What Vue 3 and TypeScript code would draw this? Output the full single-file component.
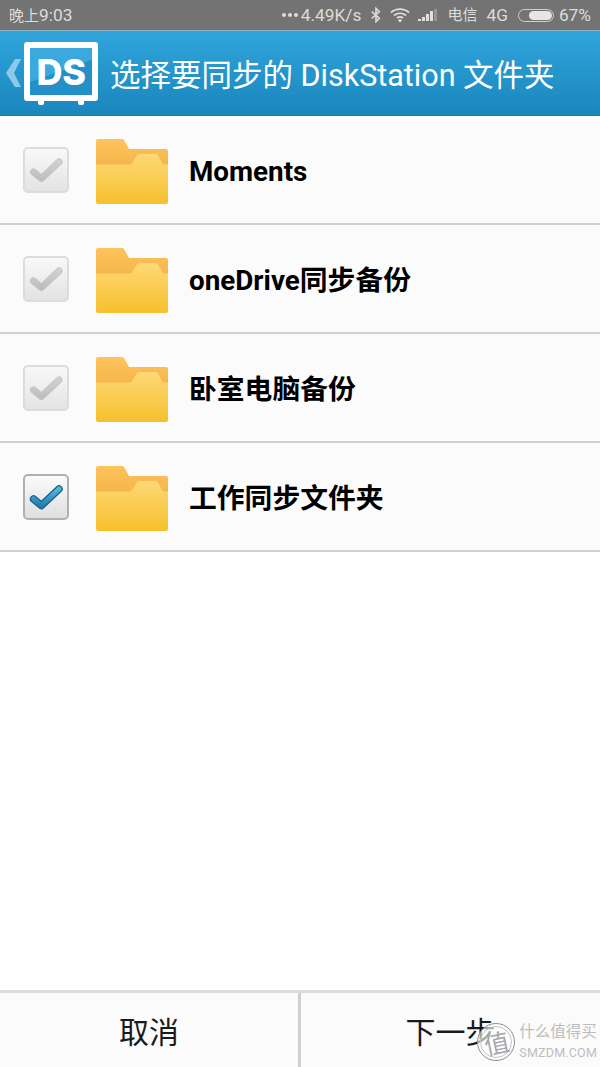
<script setup lang="ts">
interface Folder { name: string; active: boolean }
const folders: Folder[] = [
  { name: 'Moments', active: false },
  { name: 'oneDrive同步备份', active: false },
  { name: '卧室电脑备份', active: false },
  { name: '工作同步文件夹', active: true },
]
</script>

<template>
  <div class="screen">
    <div class="status">
      <span class="time"><span class="cjk">晚上</span>9:03</span>
      <div class="status-right">
        <span class="dots"><i></i><i></i><i></i></span>
        <span>4.49K/s</span>
        <svg class="bt" width="10" height="16" viewBox="0 0 12 18"><path d="M1 5l9 8-4 4V1l4 4-9 8" fill="none" stroke="#d8d8d8" stroke-width="2"/></svg>
        <svg class="wifi" width="20" height="16" viewBox="0 0 20 16">
          <path d="M1 5.500C6 1 14 1 19 5.500M4 8.500c3.500-3 8.500-3 12 0M7 11c2-1.500 4-1.500 6 0" fill="none" stroke="#e0e0e0" stroke-width="1.700"/>
          <circle cx="10" cy="13.500" r="1.600" fill="#e0e0e0"/>
        </svg>
        <svg class="signal" width="19" height="14" viewBox="0 0 19 14">
          <rect x="0" y="11" width="3" height="2" fill="#e0e0e0"/>
          <rect x="4" y="9" width="3" height="4" fill="#e0e0e0"/>
          <rect x="8" y="6" width="3" height="7" fill="#e0e0e0"/>
          <rect x="12" y="3" width="3" height="10" fill="#e0e0e0"/>
          <rect x="16" y="1" width="3" height="12" fill="#969696"/>
        </svg>
        <span class="carrier cjk">电信</span>
        <span class="net">4G</span>
        <span class="battery"><b></b></span>
        <span>67%</span>
      </div>
    </div>

    <header class="bar">
      <svg class="back" width="15" height="28" viewBox="0 0 15 28"><path d="M15 0H9L0 14l9 14h6L8 14z" fill="#8cc9e8"/></svg>
      <div class="logo">
        <div class="logo-screen"><span>DS</span></div>
        <i class="foot left"></i><i class="foot right"></i>
      </div>
      <h1>选择要同步的 DiskStation 文件夹</h1>
    </header>

    <ul class="list">
      <li v-for="f in folders" :key="f.name" class="row">
        <span class="box" :class="{ on: f.active }">
          <svg width="36" height="30" viewBox="0 0 36 30">
            <defs>
              <linearGradient id="tickBlue" x1="0" y1="0" x2="0" y2="1">
                <stop offset="0" stop-color="#58b4dc"/><stop offset="1" stop-color="#1f7fb0"/>
              </linearGradient>
              <linearGradient id="tickGrey" gradientUnits="userSpaceOnUse" x1="0" y1="5" x2="0" y2="26">
                <stop offset="0" stop-color="#d2d2d4"/><stop offset="1" stop-color="#bcbcbe"/>
              </linearGradient>
            </defs>
            <template v-if="f.active">
              <path d="M5.500 17l8 6.500L31 7" fill="none" stroke="#1d5f86" stroke-width="7.500" stroke-linecap="round" stroke-linejoin="round"/>
              <path d="M5.500 17l8 6.500L31 7" fill="none" stroke="url(#tickBlue)" stroke-width="5" stroke-linecap="round" stroke-linejoin="round"/>
            </template>
            <template v-else>
              <path d="M5.500 17l8 6.500L31 7" fill="none" stroke="#c4c4c6" stroke-width="7" stroke-linecap="round" stroke-linejoin="round"/>
              <path d="M5.500 17l8 6.500L31 7" fill="none" stroke="url(#tickGrey)" stroke-width="5" stroke-linecap="round" stroke-linejoin="round"/>
            </template>
          </svg>
        </span>
        <svg class="folder" width="72" height="65" viewBox="0 0 72 65">
          <defs>
            <linearGradient id="fBack" x1="0" y1="0" x2="0" y2="1">
              <stop offset="0" stop-color="#fec35c"/><stop offset="1" stop-color="#eeae42"/>
            </linearGradient>
            <linearGradient id="fFront" x1="0" y1="0" x2="0" y2="1">
              <stop offset="0" stop-color="#fed877"/><stop offset="1" stop-color="#f6c02c"/>
            </linearGradient>
          </defs>
          <path d="M0 2a2 2 0 0 1 2-2h24a2 2 0 0 1 2 1l5 9h37a2 2 0 0 1 2 2v30H0z" fill="url(#fBack)"/>
          <path d="M0 25.500h33c2 0 3-1 4-3l3.500-5.500c1-1.500 2-2 3.500-2h15c1.500 0 2.500.5 3.500 2l3 6c.7 1.500 1.500 2.500 3 2.500H72V63a2 2 0 0 1-2 2H2a2 2 0 0 1-2-2z" fill="url(#fFront)"/>
        </svg>
        <span class="name">{{ f.name }}</span>
      </li>
    </ul>

    <footer class="actions">
      <button class="btn cancel">取消</button>
      <button class="btn next">下一步</button>
      <div class="mark">
        <span class="seal"><span>值</span></span>
        <span class="mark-text"><b>什么值得买</b><em>SMZDM.COM</em></span>
      </div>
    </footer>
  </div>
</template>

<style scoped>
.screen {
  width: 600px;
  height: 1067px;
  display: flex;
  flex-direction: column;
  background: #fff;
  font-family: Roboto, "Noto Sans CJK SC", sans-serif;
  overflow: hidden;
}
.status {
  height: 31px;
  box-sizing: border-box;
  flex: none;
  display: flex;
  align-items: center;
  justify-content: space-between;
  padding: 0 9px 0 9px;
  background: #737373;
  color: #dcdcdc;
  font-size: 17.300px;
  line-height: 30px;
  border-bottom: 1px solid #8fb3c6;
}
.cjk { font-size: 15px; }
.status-right { display: flex; align-items: center; }
.dots { display: flex; gap: 2px; margin-right: 3px; }
.dots i { width: 4px; height: 4px; border-radius: 50%; background: #dcdcdc; }
.bt { margin: 0 9px 0 10px; }
.wifi { margin-right: 8px; }
.signal { margin-right: 10px; }
.carrier { margin-right: 9px; }
.net { margin-right: 10px; }
.battery {
  width: 32px;
  height: 9px;
  border: 1px solid #cfcfcf;
  border-radius: 7px;
  margin-right: 5px;
  padding: 1px;
  display: flex;
  justify-content: flex-end;
}
.battery b { width: 23px; background: #e6e6e6; border-radius: 5px; }
.bar {
  height: 85px;
  flex: none;
  display: flex;
  align-items: center;
  background: linear-gradient(#30a5dc, #1a86bc);
  border-bottom: 1px solid #1c7cac;
  box-sizing: border-box;
  padding-left: 6px;
}
.back { margin-right: 3px; margin-top: -1px; }
.logo {
  position: relative;
  width: 74px;
  height: 59px;
  box-sizing: border-box;
  border: 6px solid #fff;
  border-radius: 3px;
  margin-bottom: 3px;
  background: linear-gradient(160deg, #3ba9dd 48%, #2390c9 50%);
}
.logo-screen {
  height: 100%;
  display: flex;
  align-items: center;
  justify-content: center;
}
.logo-screen span {
  color: #fff;
  font: 800 36px/1 Inter, sans-serif;
  letter-spacing: -.5px;
}
.foot {
  position: absolute;
  bottom: -10px;
  width: 6px;
  height: 5px;
  background: #fff;
  border-radius: 0 0 2px 2px;
}
.foot.left { left: 8px; }
.foot.right { right: 8px; }
h1 {
  margin: 0 0 0 12px;
  font-size: 30.500px;
  font-weight: 400;
  color: #fff;
  white-space: nowrap;
}
.list { list-style: none; margin: 0; padding: 0; }
.row {
  height: 109px;
  box-sizing: border-box;
  display: flex;
  align-items: center;
  background: #fbfbfb;
  border-bottom: 2px solid #d0d0d0;
  padding-left: 23px;
}
.box {
  width: 46px;
  height: 46px;
  box-sizing: border-box;
  border: 2px solid #dcdcdc;
  border-radius: 5px;
  background: linear-gradient(#f8f8f8, #e3e3e3);
  display: flex;
  align-items: center;
  justify-content: center;
  margin-right: 27px;
}
.box.on { border-color: #b0b0b0; background: linear-gradient(#fbfbfb, #dedfe0); }
.folder { margin-right: 21px; margin-top: 4px; }
.name {
  font-size: 27.800px;
  line-height: 34px;
  font-weight: 700;
  color: #000;
  white-space: nowrap;
  margin-top: 5px;
}
.actions {
  position: relative;
  margin-top: auto;
  height: 77px;
  flex: none;
  box-sizing: border-box;
  border-top: 3px solid #dcdcdc;
  display: flex;
  background: #fbfbfb;
}
.btn {
  flex: 1;
  border: 0;
  background: transparent;
  font: 400 30px Roboto, "Noto Sans CJK SC", sans-serif;
  color: #1a1a1a;
  padding: 0;
}
.cancel { border-right: 3px solid #cfcfcf; flex: 0 0 301px; box-sizing: border-box; }
.mark {
  position: absolute;
  right: 3px;
  top: 30px;
  display: flex;
  align-items: center;
  gap: 4px;
  color: #bdbdbd;
}
.seal {
  width: 38px;
  height: 38px;
  box-sizing: border-box;
  border: 1px solid #8f8f8f;
  outline: 1px solid #c4c4c4;
  outline-offset: -4px;
  border-radius: 50%;
  display: flex;
  align-items: center;
  justify-content: center;
  font-size: 25px;
  color: #a8a8a8;
  background: rgba(255, 255, 255, .6);
}
.seal span { transform: rotate(-12deg); }
.mark-text { display: flex; flex-direction: column; align-items: flex-start; line-height: 1; }
.mark-text b { font-size: 15.500px; font-weight: 400; margin-bottom: 6px; }
.mark-text em { font-style: normal; font-size: 12.500px; letter-spacing: .2px; }
</style>

<style>
html, body { margin: 0; background: #fff; }
</style>
